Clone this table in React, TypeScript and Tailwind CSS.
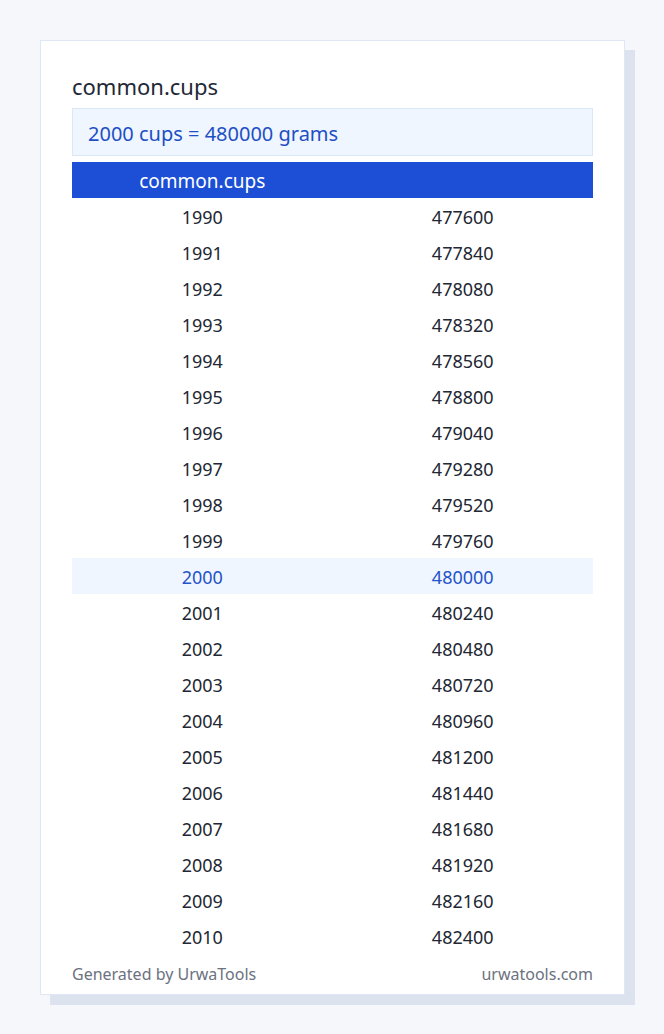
const rows = Array.from({ length: 21 }, (_, i) => ({
  year: 1990 + i,
  grams: (1990 + i) * 240,
}));

const App = () => {
  return (
    <div className="min-h-[1034px] bg-[#f5f7fb] pt-[40px] pl-[40px]" style={{ fontFamily: '"Noto Sans", "Open Sans", sans-serif' }}>
      <div className="relative w-[585px]">
        <div className="absolute left-[10px] top-[10px] w-full h-full bg-[#dce3ef]" />
        <div className="relative bg-white border border-[#dfe7f5] px-[31px] pt-[31px] pb-[10px]">
          <h1 className="text-[22px] leading-[28px] text-[#1f2937] mb-[8px]">common.cups</h1>
          <div className="bg-[#eff6ff] border border-[#dbe6f6] h-[48px] flex items-center px-[15px] pt-[3px] text-[20px] text-[#1e4fc4]">
            2000 cups = 480000 grams
          </div>
          <table className="w-full mt-[6px] border-collapse text-[18px]">
            <thead>
              <tr className="bg-[#1c4fd6] text-white h-[36px]">
                <th className="w-1/2 font-normal text-center text-[19px] pt-[2px]">common.cups</th>
                <th className="w-1/2 font-normal"></th>
              </tr>
            </thead>
            <tbody>
              {rows.map((r) => {
                const hl = r.year === 2000;
                return (
                  <tr key={r.year} className={hl ? 'h-[36px] bg-[#eff6ff] text-[#2553c9]' : 'h-[36px] text-[#222733]'}>
                    <td className="text-center pt-[2px]">{r.year}</td>
                    <td className="text-center pt-[2px]">{r.grams}</td>
                  </tr>
                );
              })}
            </tbody>
          </table>
          <div className="flex justify-between mt-[10px] text-[16px] leading-[20px] text-[#6b7280]">
            <span>Generated by UrwaTools</span>
            <span>urwatools.com</span>
          </div>
        </div>
      </div>
    </div>
  );
};

export default App;
